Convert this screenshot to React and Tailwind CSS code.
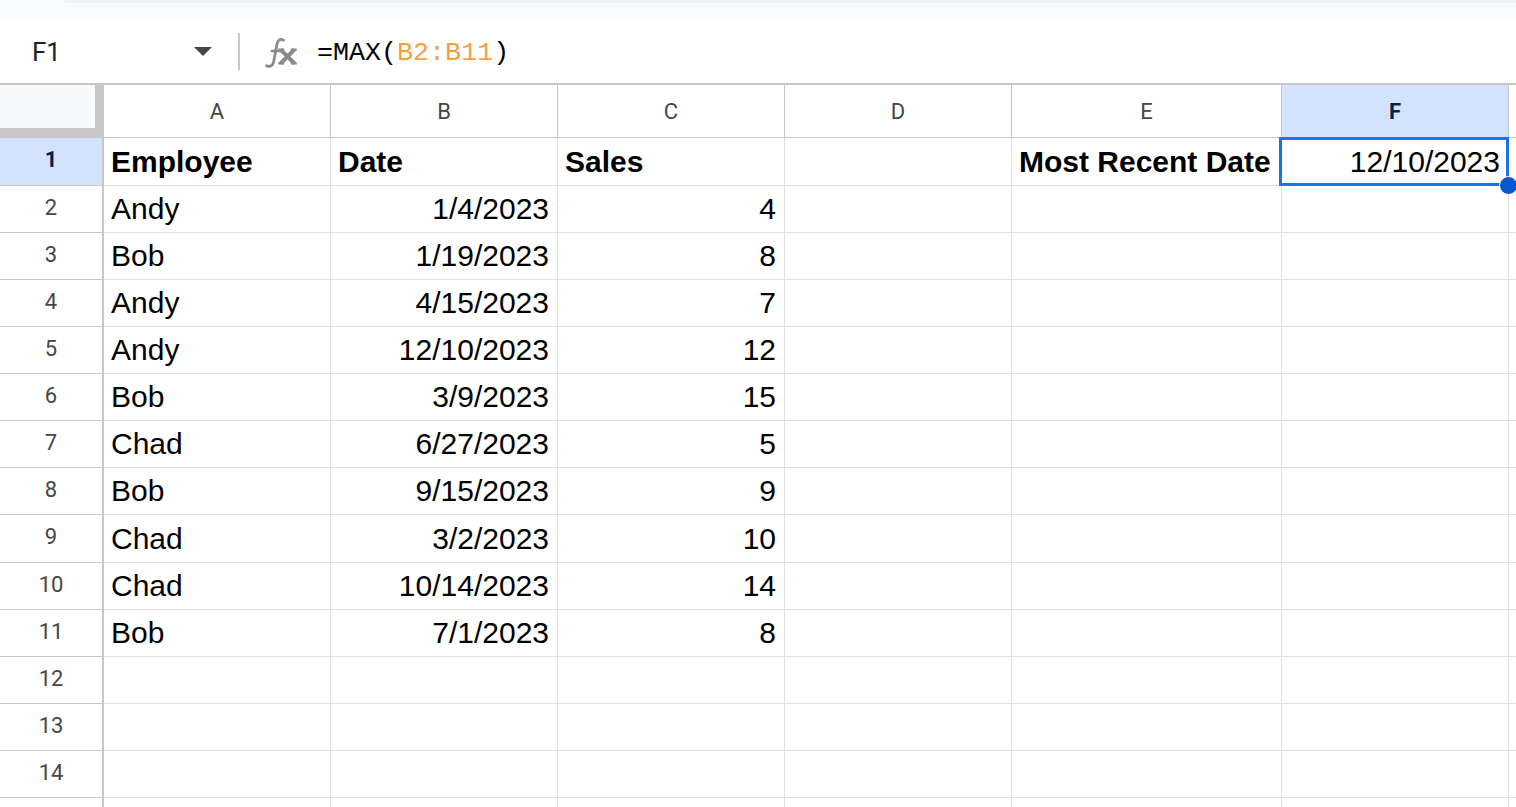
import React from "react";

const COLS = [
  { key: "A", w: "w-[227px]" },
  { key: "B", w: "w-[227px]" },
  { key: "C", w: "w-[227px]" },
  { key: "D", w: "w-[227px]" },
  { key: "E", w: "w-[270px]" },
  { key: "F", w: "w-[227px]" },
  { key: "G", w: "w-[227px]" },
];

const DATA = [
  ["Employee", "Date", "Sales", "", "Most Recent Date", "12/10/2023"],
  ["Andy", "1/4/2023", "4"],
  ["Bob", "1/19/2023", "8"],
  ["Andy", "4/15/2023", "7"],
  ["Andy", "12/10/2023", "12"],
  ["Bob", "3/9/2023", "15"],
  ["Chad", "6/27/2023", "5"],
  ["Bob", "9/15/2023", "9"],
  ["Chad", "3/2/2023", "10"],
  ["Chad", "10/14/2023", "14"],
  ["Bob", "7/1/2023", "8"],
  [],
  [],
  [],
  [],
];

const ROW_H = ["h-[48px]", "h-[47px]", "h-[47px]", "h-[47px]", "h-[47px]", "h-[47px]", "h-[47px]", "h-[47px]", "h-[48px]", "h-[47px]", "h-[47px]", "h-[47px]", "h-[47px]", "h-[47px]", "h-[47px]"];

function FxIcon() {
  return (
    <svg width="38" height="34" viewBox="0 0 38 34" fill="none">
      <path d="M22.5 5.2C19.2 3.4 16.8 4.8 16 9L12.6 27C11.8 31 9.4 32 5.6 30.8" stroke="#8a8a8a" strokeWidth="2.8" strokeLinecap="round" />
      <path d="M10.8 16H19.2" stroke="#8a8a8a" strokeWidth="2.6" strokeLinecap="round" />
      <path d="M19.5 14.5L33.5 28.5M33.5 14.5L19.5 28.5" stroke="#8a8a8a" strokeWidth="4" />
      <path d="M17.2 14.7H23.2M29.8 14.7H35.8M17.2 28.3H23.2M29.8 28.3H35.8" stroke="#8a8a8a" strokeWidth="2.2" />
    </svg>
  );
}

function isNum(v) {
  return /^[0-9/]+$/.test(v);
}

export default function App() {
  return (
    <div className="w-[1516px] h-[807px] overflow-hidden bg-white" style={{ fontFamily: '"Liberation Sans", Arial, sans-serif' }}>
      {/* top toolbar remnant */}
      <div className="h-[20px] bg-[#f9fbfd] relative">
        <div className="ml-[64px] h-[3px] bg-[#edf2fa] rounded-bl-[12px]" />
      </div>

      {/* formula bar */}
      <div className="h-[63px] flex items-center bg-white">
        <div className="w-[238px] flex items-center pl-[32px] pr-[26px]">
          <span className="text-[26px] text-[#1f1f1f] leading-none" style={{ fontFamily: 'Roboto, "Liberation Sans", sans-serif' }}>F1</span>
          <span className="ml-auto w-0 h-0 border-l-[9px] border-r-[9px] border-t-[9px] border-l-transparent border-r-transparent border-t-[#444746]" />
        </div>
        <div className="w-[2px] h-[37px] bg-[#c7c7c7]" />
        <div className="ml-[21px] mt-[1px]">
          <FxIcon />
        </div>
        <div className="ml-[18px] mt-[3px] text-[26.7px] leading-none text-black" style={{ fontFamily: '"Liberation Mono", "DejaVu Sans Mono", monospace' }}>
          =MAX(<span className="text-[#f5a041]">B2:B11</span>)
        </div>
      </div>

      {/* grid */}
      <div className="border-t-2 border-[#c7c7c7]">
        {/* column header row */}
        <div className="flex h-[53px]">
          <div className="w-[104px] shrink-0 bg-[#f8f9fa] border-r-[9px] border-b-[10px] border-[#c7c7c7]" />
          {COLS.map((c) => (
            <div
              key={c.key}
              className={`${c.w} shrink-0 flex items-center justify-center border-r border-b border-[#c7c7c7] text-[22px] ${c.key === "F" ? "bg-[#d3e3fd] text-[#0b1f4a] font-bold" : "bg-white text-[#444746]"}`}
              style={{ fontFamily: 'Roboto, "Liberation Sans", sans-serif' }}
            >
              {c.key === "G" ? "" : c.key}
            </div>
          ))}
        </div>

        {DATA.map((row, ri) => (
          <div key={ri} className={`flex ${ROW_H[ri]}`}>
            <div
              className={`w-[104px] shrink-0 flex items-center justify-center pb-[4px] border-r-2 border-b border-[#c7c7c7] text-[22px] ${ri === 0 ? "bg-[#d3e3fd] text-[#0b1f4a] font-bold" : "bg-white text-[#444746]"}`}
              style={{ fontFamily: 'Roboto, "Liberation Sans", sans-serif' }}
            >
              {ri < 14 ? ri + 1 : ""}
            </div>
            {COLS.map((c, ci) => {
              const v = row[ci] || "";
              const bold = ri === 0 && ci !== 5;
              const right = v && isNum(v);
              const sel = ri === 0 && ci === 5;
              return (
                <div
                  key={c.key}
                  className={`${c.w} shrink-0 relative flex items-center border-r border-b border-[#e1e1e1] pl-[7px] pr-[8px] text-[30px] leading-[30px] text-black whitespace-nowrap ${right ? "justify-end" : "justify-start"} ${bold ? "font-bold" : ""} ${sel ? "z-10" : ""}`}
                >
                  {v}
                  {sel && (
                    <>
                      <div className="absolute -left-[3px] -top-[1px] -right-[1px] bottom-[-1px] border-[3px] border-[#1a73e8] pointer-events-none" />
                      <div className="absolute right-[-10px] bottom-[-10px] w-[19px] h-[19px] rounded-full bg-[#0b57d0] border border-white" />
                    </>
                  )}
                </div>
              );
            })}
          </div>
        ))}
      </div>
    </div>
  );
}
